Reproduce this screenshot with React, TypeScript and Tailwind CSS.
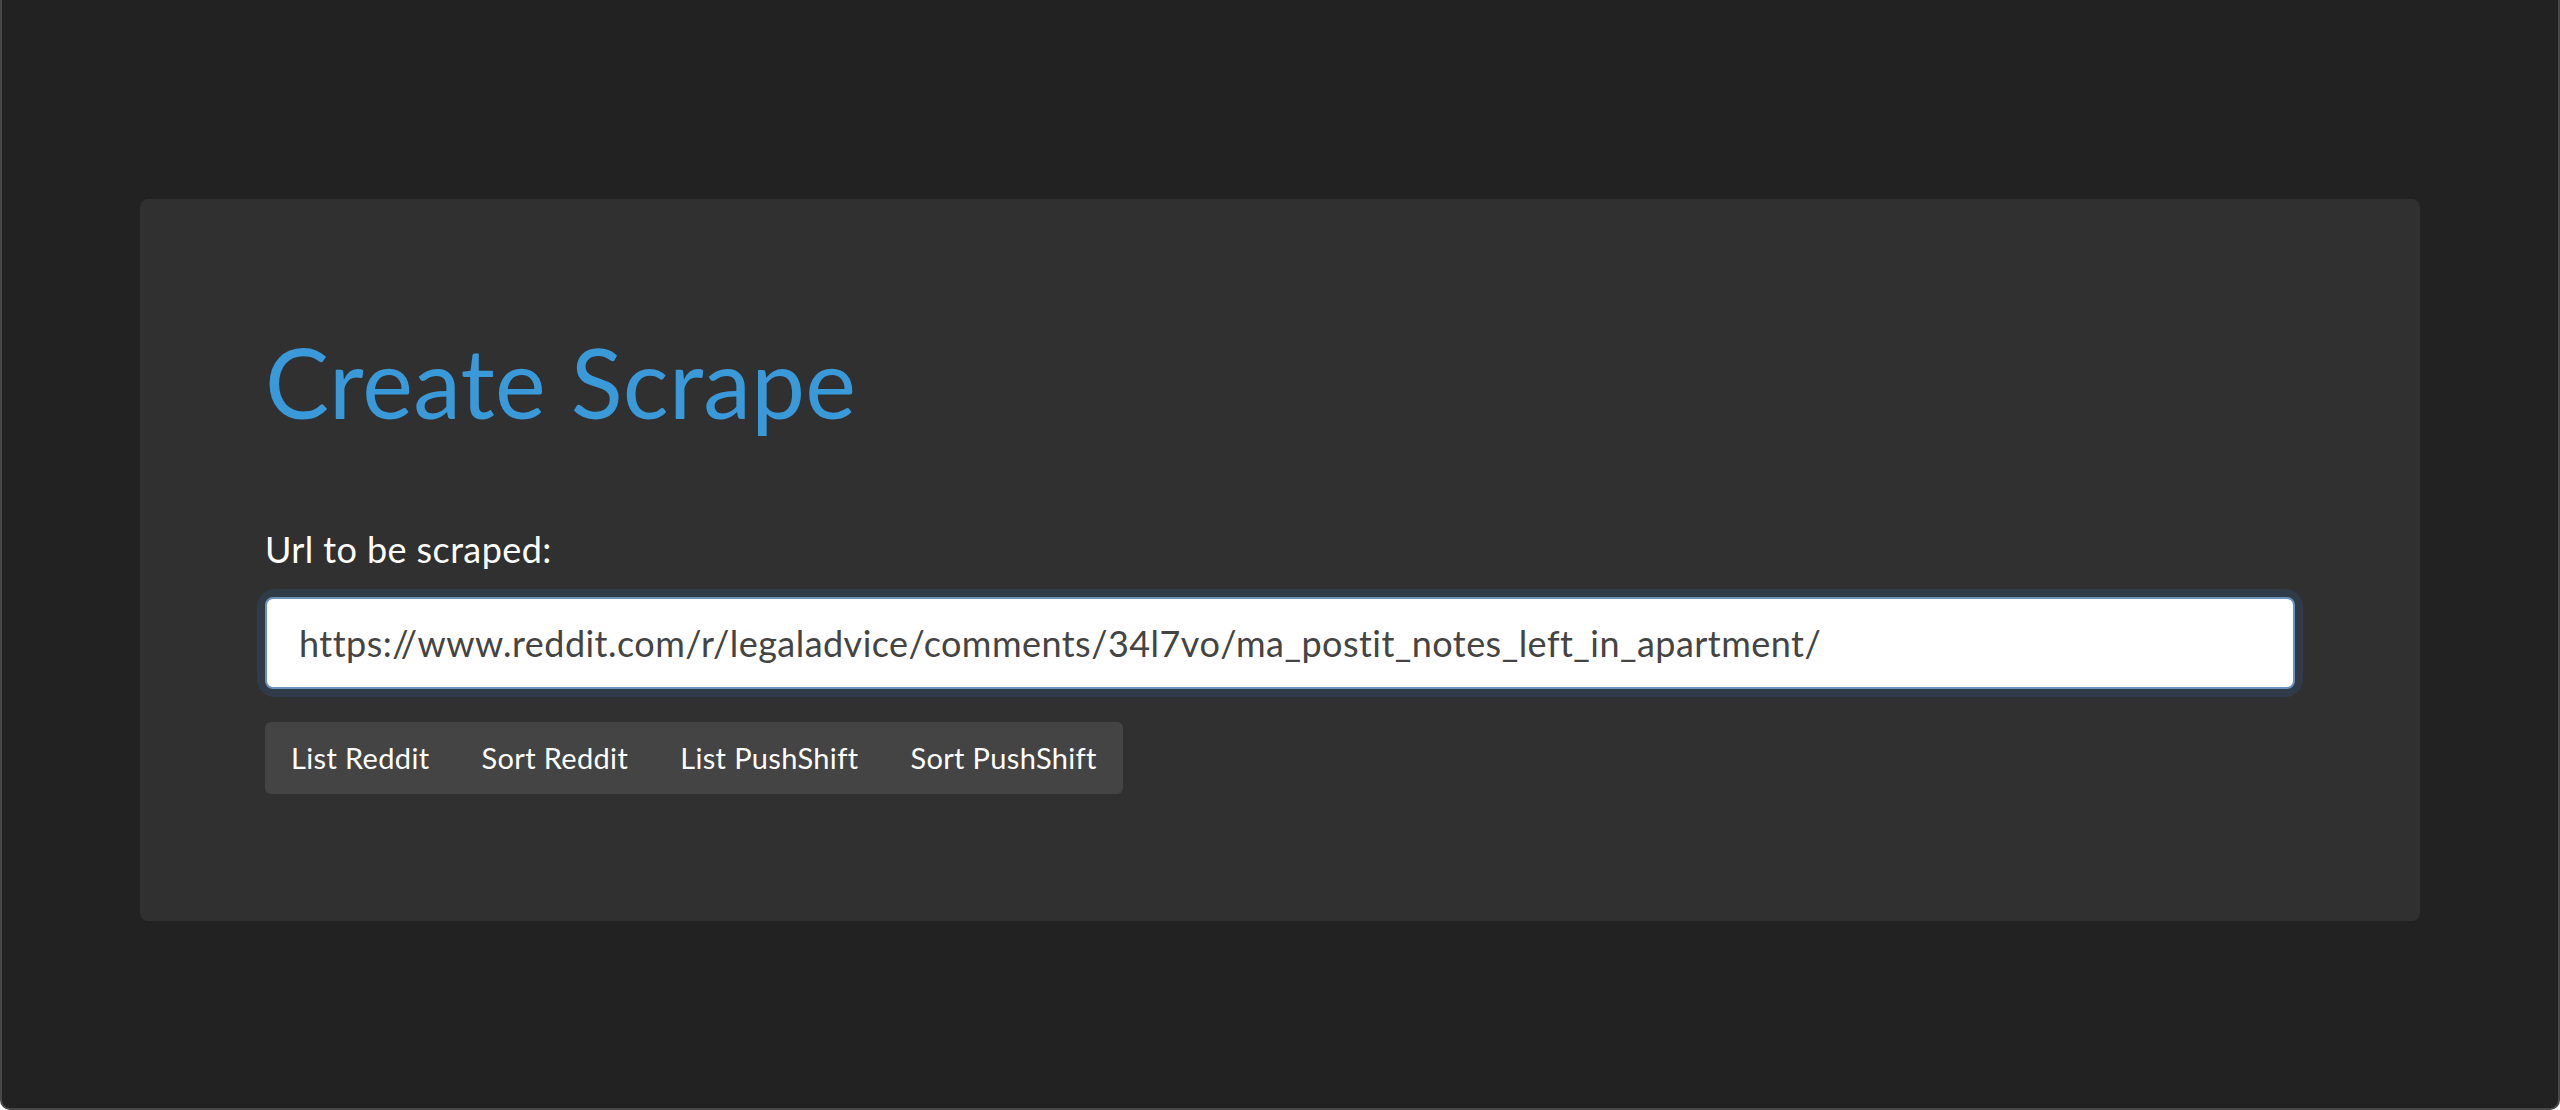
import React from "react";

export default function App() {
  return (
    <div
      className="w-[2560px] h-[1110px] bg-[#222222] border-x-2 border-b-2 border-[#474747] rounded-b-[10px] overflow-hidden pt-[199px] px-[138px]"
      style={{ fontFamily: "Lato, 'Open Sans', sans-serif" }}
    >
      <div className="w-[2280px] bg-[#303030] rounded-[8px] px-[125px] pt-[125px] pb-[127px]">
        <h1 className="text-[96px] leading-[1.2] font-normal tracking-[0.25px] text-[#3a9ad9] m-0">Create Scrape</h1>
        <div className="mt-[83px] text-[36px] leading-[1.5] tracking-[0.4px] text-white">Url to be scraped:</div>
        <div className="mt-[21px] rounded-[10px] shadow-[0_0_0_8px_#303b49]">
          <input
            readOnly
            value="https://www.reddit.com/r/legaladvice/comments/34l7vo/ma_postit_notes_left_in_apartment/"
            className="w-full h-[92px] bg-white border-[2px] border-[#6b91bd] rounded-[8px] px-[32px] text-[36px] tracking-[0.46px] text-[#444444] outline-none"
            style={{ fontFamily: "Lato, 'Open Sans', sans-serif" }}
          />
        </div>
        <div className="mt-[33px] inline-flex h-[72px] bg-[#444444] rounded-[6px] text-white text-[29px] tracking-[0.35px]">
          {["List Reddit", "Sort Reddit", "List PushShift", "Sort PushShift"].map((t) => (
            <button key={t} className="px-[26px] h-full flex items-center text-white tracking-[0.35px]">
              {t}
            </button>
          ))}
        </div>
      </div>
    </div>
  );
}
